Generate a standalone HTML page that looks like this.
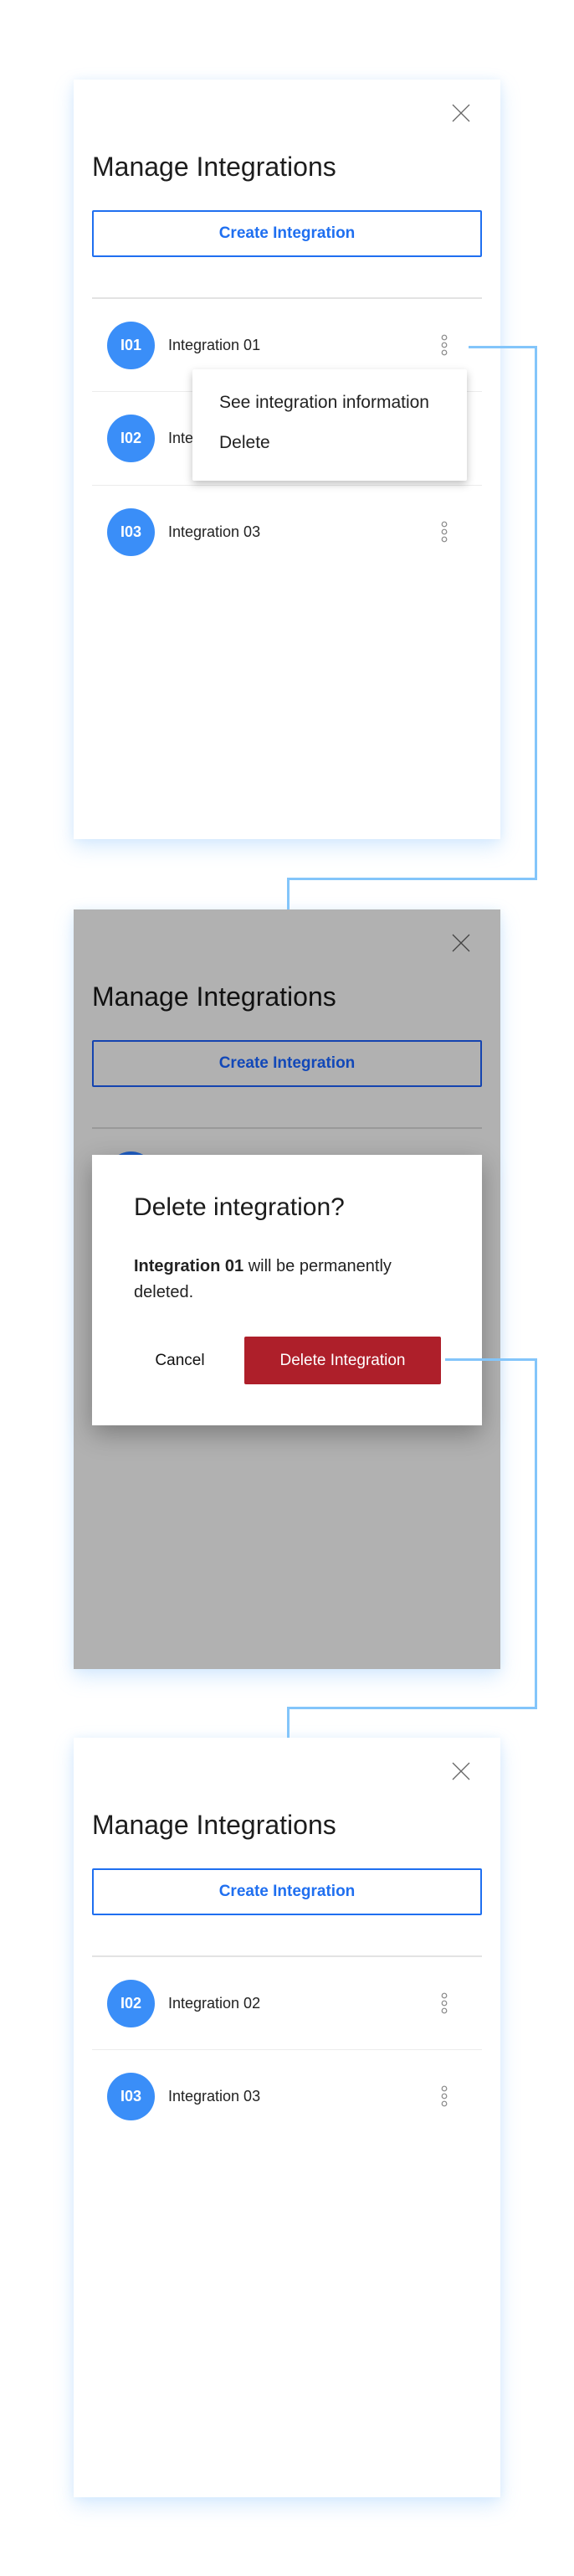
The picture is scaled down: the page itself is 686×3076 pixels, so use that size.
<!DOCTYPE html>
<html><head><style>
*{margin:0;padding:0;box-sizing:border-box}
body{width:686px;height:3076px;background:#fff;position:relative;font-family:"Liberation Sans",sans-serif;overflow:hidden}
.p{position:absolute;left:88px;width:510px;height:907px;background:#fff;box-shadow:0 10px 22px rgba(120,185,250,.28),0 0 10px rgba(150,200,250,.18)}
.x{position:absolute;left:452px;top:29px;width:22px;height:22px}
.t{position:absolute;left:22px;top:86px;font-size:32px;color:#1d1d1d;white-space:nowrap}
.b{position:absolute;left:22px;top:156px;width:466px;height:56px;border:2px solid #1f6ff0;border-radius:2px;color:#1f6ff0;font-size:19px;font-weight:bold;text-align:center;line-height:52px}
.d{position:absolute;left:22px;width:466px;height:2px;background:#e3e3e3}
.r{position:absolute;left:22px;width:466px;height:1px;background:#ececec}
.av{position:absolute;left:40px;width:57px;height:57px;border-radius:50%;background:#3a8ef8;color:#fff;font-weight:bold;font-size:18px;text-align:center;line-height:57px}
.n{position:absolute;left:113px;font-size:18px;color:#222;line-height:24px}
.k{position:absolute;left:437px;width:12px;height:26px}
.ln{position:absolute;background:#83c5fa}
</style></head><body>

<!-- Panel 1 -->
<div class="p" style="top:95px">
<svg class="x" viewBox="0 0 22 22"><path d="M1 1L21 21M21 1L1 21" stroke="#666" stroke-width="1.3"/></svg>
<div class="t">Manage Integrations</div>
<div class="b">Create Integration</div>
<div class="d" style="top:260px"></div>
<div class="av" style="top:289px">I01</div><div class="n" style="top:305px">Integration 01</div>
<svg class="k" style="top:304px" viewBox="0 0 12 26"><g fill="none" stroke="#888" stroke-width="1.2"><circle cx="6" cy="4" r="2.8"/><circle cx="6" cy="13" r="2.8"/><circle cx="6" cy="22" r="2.8"/></g></svg>
<div class="r" style="top:372px"></div>
<div class="av" style="top:400px">I02</div><div class="n" style="top:416px">Integration 02</div>
<div class="r" style="top:484px"></div>
<div class="av" style="top:512px">I03</div><div class="n" style="top:528px">Integration 03</div>
<svg class="k" style="top:527px" viewBox="0 0 12 26"><g fill="none" stroke="#888" stroke-width="1.2"><circle cx="6" cy="4" r="2.8"/><circle cx="6" cy="13" r="2.8"/><circle cx="6" cy="22" r="2.8"/></g></svg>
<div style="position:absolute;left:142px;top:346px;width:328px;height:133px;background:#fff;border-radius:2px;box-shadow:0 4px 10px rgba(0,0,0,.25)">
<div style="position:absolute;left:32px;top:28px;font-size:21px;color:#222;white-space:nowrap">See integration information</div>
<div style="position:absolute;left:32px;top:76px;font-size:21px;color:#222">Delete</div>
</div>
</div>

<!-- Panel 2 -->
<div class="p" style="top:1086px;background:#b1b1b1">
<svg class="x" viewBox="0 0 22 22"><path d="M1 1L21 21M21 1L1 21" stroke="#444" stroke-width="1.3"/></svg>
<div class="t" style="color:#111">Manage Integrations</div>
<div class="b" style="border-color:#1544b0;color:#1248b8">Create Integration</div>
<div class="d" style="top:260px;background:#999"></div>
<div class="av" style="top:289px;background:#1f5cc0"></div>
<div style="position:absolute;left:22px;top:293px;width:466px;height:323px;background:#fff;box-shadow:0 10px 28px rgba(0,0,0,.3)">
<div style="position:absolute;left:50px;top:46px;font-size:30px;color:#1b1b1b;white-space:nowrap">Delete integration?</div>
<div style="position:absolute;left:50px;top:118px;width:340px;font-size:20px;line-height:31px;color:#222"><b>Integration 01</b> will be permanently deleted.</div>
<div style="position:absolute;left:50px;top:217px;width:110px;text-align:center;line-height:57px;font-size:19px;color:#111">Cancel</div>
<div style="position:absolute;left:182px;top:217px;width:235px;height:57px;background:#ae1f2a;color:#fff;font-size:19px;text-align:center;line-height:57px;border-radius:2px">Delete Integration</div>
</div>
</div>

<!-- Panel 3 -->
<div class="p" style="top:2075px">
<svg class="x" viewBox="0 0 22 22"><path d="M1 1L21 21M21 1L1 21" stroke="#666" stroke-width="1.3"/></svg>
<div class="t">Manage Integrations</div>
<div class="b">Create Integration</div>
<div class="d" style="top:260px"></div>
<div class="av" style="top:289px">I02</div><div class="n" style="top:305px">Integration 02</div>
<svg class="k" style="top:304px" viewBox="0 0 12 26"><g fill="none" stroke="#888" stroke-width="1.2"><circle cx="6" cy="4" r="2.8"/><circle cx="6" cy="13" r="2.8"/><circle cx="6" cy="22" r="2.8"/></g></svg>
<div class="r" style="top:372px"></div>
<div class="av" style="top:400px">I03</div><div class="n" style="top:416px">Integration 03</div>
<svg class="k" style="top:415px" viewBox="0 0 12 26"><g fill="none" stroke="#888" stroke-width="1.2"><circle cx="6" cy="4" r="2.8"/><circle cx="6" cy="13" r="2.8"/><circle cx="6" cy="22" r="2.8"/></g></svg>
</div>

<!-- connectors -->
<div class="ln" style="left:560px;top:413px;width:82px;height:3px"></div>
<div class="ln" style="left:639px;top:413px;width:3px;height:638px"></div>
<div class="ln" style="left:343px;top:1048px;width:299px;height:3px"></div>
<div class="ln" style="left:343px;top:1048px;width:3px;height:38px"></div>
<div class="ln" style="left:532px;top:1622px;width:110px;height:3px"></div>
<div class="ln" style="left:639px;top:1622px;width:3px;height:419px"></div>
<div class="ln" style="left:343px;top:2038px;width:299px;height:3px"></div>
<div class="ln" style="left:343px;top:2038px;width:3px;height:37px"></div>
</body></html>
